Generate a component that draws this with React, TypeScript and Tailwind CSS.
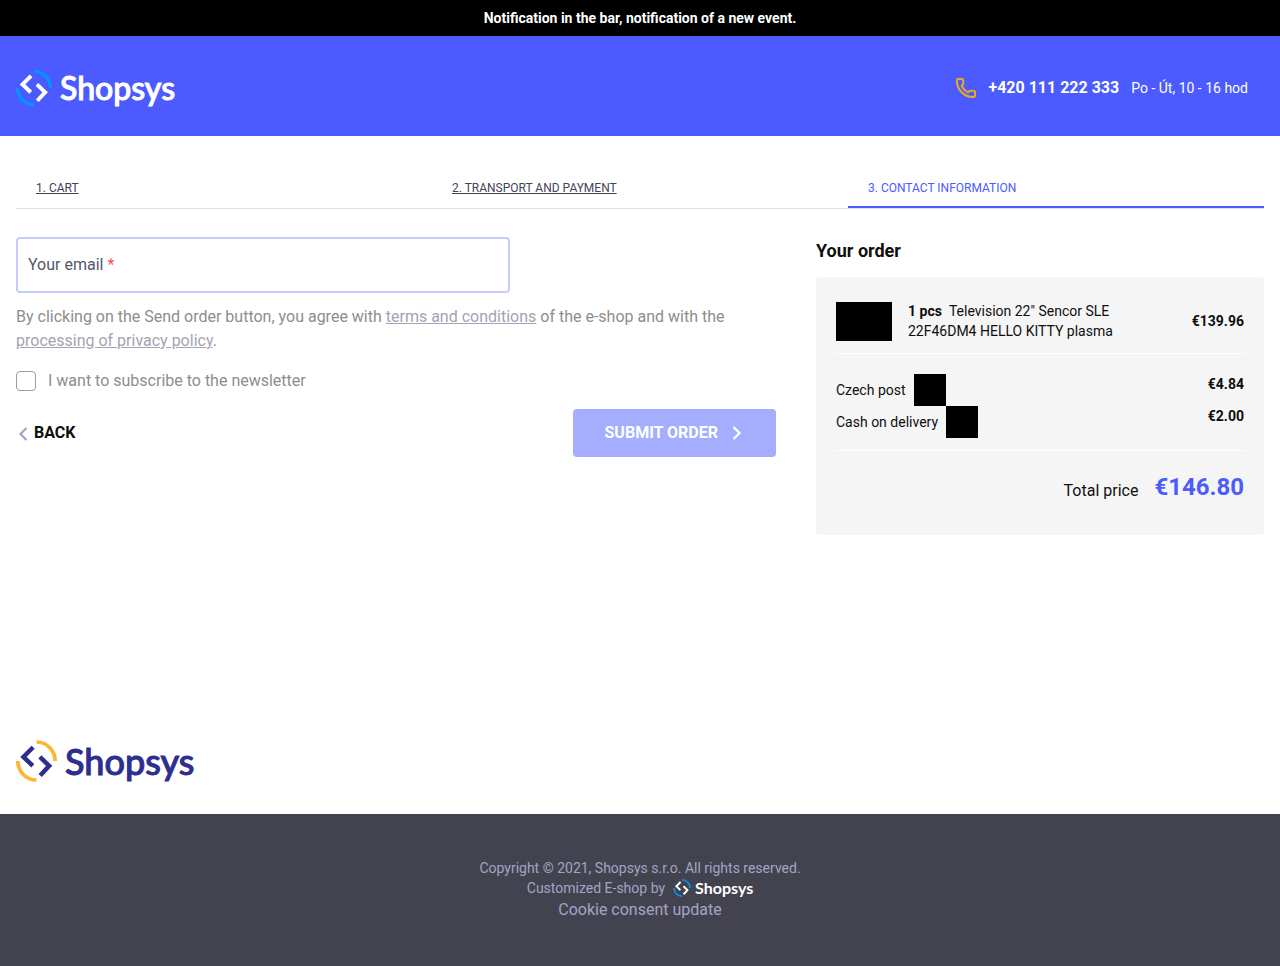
import React from 'react';
import { Phone } from 'lucide-react';

type LogoProps = {
    arc: string;
    text: string;
    markSize: string;
    textSize: string;
};

const Logo = ({ arc, text, markSize, textSize }: LogoProps) => (
    <span className={`flex items-center ${text}`}>
        <svg viewBox="0 0 110 112" fill="none" className={`shrink-0 ${markSize}`} aria-hidden="true">
            <path d="M55 5A50 51 0 0 1 105 56M5 56A50 51 0 0 0 55 107" className={arc} strokeWidth="10" />
            <path d="M46 19 20 45 45 69M64 45 89 69 65 95" stroke="currentColor" strokeWidth="12" />
        </svg>
        <span className={`font-['Lato',sans-serif] ${textSize}`}>Shopsys</span>
    </span>
);

type ChevronProps = { direction: 'left' | 'right'; className: string };

const Chevron = ({ direction, className }: ChevronProps) => (
    <svg viewBox="0 0 16 16" fill="none" stroke="currentColor" strokeWidth="2.2" className={className} aria-hidden="true">
        <path d={direction === 'left' ? 'M10.5 2 4.5 8l6 6' : 'm5.5 2 6 6-6 6'} />
    </svg>
);

const services = [
    { name: 'Czech post', price: '€4.84' },
    { name: 'Cash on delivery', price: '€2.00' },
];

const OrderSummary = () => (
    <aside className="w-full lg:w-[448px] lg:shrink-0">
        <h2 className="mb-3 text-lg leading-7 font-bold">Your order</h2>
        <div className="rounded bg-[#f5f5f5] px-5 pt-6 pb-8 text-sm leading-5">
            <div className="flex items-center border-b border-white pb-3">
                <div className="h-[39px] w-14 shrink-0 bg-black" />
                <p className="ml-4 flex-1 pr-16">
                    <strong className="mr-[7px] font-bold">1 pcs</strong>
                    Television 22" Sencor SLE 22F46DM4 HELLO KITTY plasma
                </p>
                <strong className="font-bold">€139.96</strong>
            </div>
            <ul className="border-b border-white pt-5 pb-3">
                {services.map((service) => (
                    <li key={service.name} className="flex items-start justify-between">
                        <span className="flex items-center gap-2">
                            {service.name}
                            <span className="h-8 w-8 bg-black" />
                        </span>
                        <strong className="font-bold">{service.price}</strong>
                    </li>
                ))}
            </ul>
            <div className="flex items-end justify-end gap-4 pt-5">
                <span className="text-base leading-6">Total price</span>
                <strong className="text-2xl leading-8 font-bold text-[#4b5bff]">€146.80</strong>
            </div>
        </div>
    </aside>
);

export default function App() {
    return (
        <div className="flex min-h-screen flex-col bg-white font-['Roboto',sans-serif] text-base text-[#0f0f0f]">
            <div className="bg-black py-2 text-center text-sm leading-5 font-bold text-white">
                Notification in the bar, notification of a new event.
            </div>

            <header className="flex items-center justify-between bg-[#4b5bff] pt-[33px] pr-8 pb-[29px] pl-4">
                <a href="#home" aria-label="Shopsys">
                    <Logo
                        arc="stroke-[#0095ff]"
                        text="text-white"
                        markSize="h-[38px] w-9 mr-2"
                        textSize="font-medium text-[32px] leading-9 [-webkit-text-stroke:1px]"
                    />
                </a>
                <div className="flex items-center gap-3 text-white">
                    <Phone viewBox="1 1 22 22" className="h-5 w-5 text-[#e8ab1e]" strokeWidth={2.25} />
                    <a href="tel:+420111222333" className="font-bold">
                        +420 111 222 333
                    </a>
                    <span className="text-sm">Po - Út, 10 - 16 hod</span>
                </div>
            </header>

            <main className="px-4 pt-8">
                <ol className="grid grid-cols-3 border-b border-[#e0e0e8] text-xs uppercase">
                    <li className="px-5 py-3">
                        <a href="#cart" className="text-[#43435a] underline">
                            1. Cart
                        </a>
                    </li>
                    <li className="px-5 py-3">
                        <a href="#transport" className="text-[#43435a] underline">
                            2. Transport and payment
                        </a>
                    </li>
                    <li className="border-b-2 border-[#4b5bff] px-5 pt-3 text-[#4b5bff]">3. Contact information</li>
                </ol>

                <div className="mt-7 flex flex-col gap-10 lg:flex-row">
                    <form className="min-w-0 flex-1" onSubmit={(event) => event.preventDefault()}>
                        <div className="relative w-full lg:w-[65%]">
                            <input
                                id="email"
                                type="email"
                                required
                                className="block h-14 w-full rounded border-2 border-[#c5cbff] bg-white px-[10px] outline-none"
                            />
                            <label htmlFor="email" className="absolute top-4 left-3 text-[#56566b]">
                                Your email <span className="text-[#f25353]">*</span>
                            </label>
                        </div>

                        <p className="mt-3 text-[#8d8d8d]">
                            By clicking on the Send order button, you agree with{' '}
                            <a href="#terms" className="text-[#a3a3b3] underline">
                                terms and conditions
                            </a>{' '}
                            of the e-shop and with the{' '}
                            <a href="#privacy" className="text-[#a3a3b3] underline">
                                processing of privacy policy
                            </a>
                            .
                        </p>

                        <div className="mt-4 flex items-center gap-3 text-[#8d8d8d]">
                            <input
                                id="newsletter"
                                type="checkbox"
                                className="h-5 w-5 appearance-none rounded border border-[#9c9ca8] bg-white checked:bg-[#4b5bff]"
                            />
                            <label htmlFor="newsletter">I want to subscribe to the newsletter</label>
                        </div>

                        <div className="mt-4 flex items-center justify-between">
                            <a href="#transport" className="flex items-center gap-0.5 font-bold uppercase">
                                <Chevron direction="left" className="mt-0.5 h-4 w-4 text-[#a3a3c4]" />
                                Back
                            </a>
                            <button
                                type="submit"
                                className="flex h-12 items-center gap-[10px] rounded bg-[#a5adff] px-8 font-bold text-white uppercase"
                            >
                                Submit order
                                <Chevron direction="right" className="h-4 w-4" />
                            </button>
                        </div>
                    </form>
                    <OrderSummary />
                </div>
            </main>

            <div className="mt-auto px-4 pt-12 pb-8">
                <Logo
                    arc="stroke-[#fdb62f]"
                    text="text-[#2d2e8f]"
                    markSize="h-[42px] w-[41px] mr-2"
                    textSize="font-medium text-4xl leading-10 [-webkit-text-stroke:1px]"
                />
            </div>

            <footer className="flex flex-col items-center bg-[#43434f] py-11 text-center text-[#a3a3c4]">
                <p className="text-sm leading-5">Copyright © 2021, Shopsys s.r.o. All rights reserved.</p>
                <div className="flex h-5 items-center gap-2 text-sm leading-5">
                    Customized E-shop by
                    <Logo
                        arc="stroke-[#0095ff]"
                        text="text-white"
                        markSize="h-[18px] w-[18px] mr-1"
                        textSize="font-bold text-base leading-5"
                    />
                </div>
                <a href="#cookies" className="leading-6">
                    Cookie consent update
                </a>
            </footer>
        </div>
    );
}
